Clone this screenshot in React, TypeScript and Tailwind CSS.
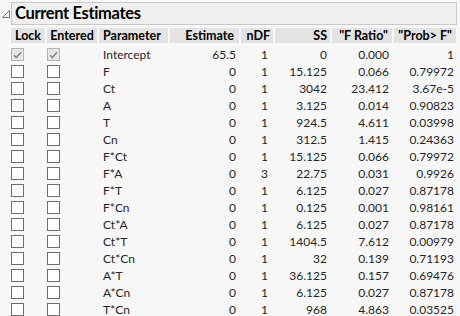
import React from "react";

const rows: [string, string, string, string, string, string][] = [
  ["Intercept", "65.5", "1", "0", "0.000", "1"],
  ["F", "0", "1", "15.125", "0.066", "0.79972"],
  ["Ct", "0", "1", "3042", "23.412", "3.67e-5"],
  ["A", "0", "1", "3.125", "0.014", "0.90823"],
  ["T", "0", "1", "924.5", "4.611", "0.03998"],
  ["Cn", "0", "1", "312.5", "1.415", "0.24363"],
  ["F*Ct", "0", "1", "15.125", "0.066", "0.79972"],
  ["F*A", "0", "3", "22.75", "0.031", "0.9926"],
  ["F*T", "0", "1", "6.125", "0.027", "0.87178"],
  ["F*Cn", "0", "1", "0.125", "0.001", "0.98161"],
  ["Ct*A", "0", "1", "6.125", "0.027", "0.87178"],
  ["Ct*T", "0", "1", "1404.5", "7.612", "0.00979"],
  ["Ct*Cn", "0", "1", "32", "0.139", "0.71193"],
  ["A*T", "0", "1", "36.125", "0.157", "0.69476"],
  ["A*Cn", "0", "1", "6.125", "0.027", "0.87178"],
  ["T*Cn", "0", "1", "968", "4.863", "0.03525"],
];

function Box({ checked }: { checked?: boolean }) {
  if (checked) {
    return (
      <div className="w-[13px] h-[13px] border border-[#b4b4b4] bg-[#e6e6e6] flex items-center justify-center">
        <svg width="9" height="8" viewBox="0 0 9 8">
          <path d="M1 4.2 L3.3 6.5 L8 1.2" fill="none" stroke="#8a8a8a" strokeWidth="1.6" />
        </svg>
      </div>
    );
  }
  return <div className="w-[13px] h-[13px] border border-[#6e6e6e] bg-white" />;
}

const cols = "grid grid-cols-[34px_50px_69px_69px_32px_55px_60px_62px] gap-x-[2px] pl-[11px]";

export default function App() {
  return (
    <div className="w-[460px] h-[316px] bg-[#f7f7f7] overflow-hidden font-['Lato',sans-serif] text-[12px]">
      <div className="flex items-center pt-[2px]">
        <div className="w-[11px] flex justify-center pt-[1px]">
          <svg width="10" height="10" viewBox="0 0 10 10">
            <path d="M1.5 8.5 L8.5 8.5 L8.5 1.5 Z" fill="none" stroke="#7a7a7a" strokeWidth="1" />
          </svg>
        </div>
        <div className="w-[446px] h-[23px] border border-[#c9c9c9] bg-[#efefef] flex items-center pl-[3px]">
          <span className="text-[16.5px] font-bold tracking-[-0.35px] text-black">Current Estimates</span>
        </div>
      </div>

      <div className={`${cols} mt-[3px] h-[15px] font-bold text-black text-[12.5px] leading-[15px]`}>
        <div className="bg-[#e3e3e3] text-center">Lock</div>
        <div className="bg-[#e3e3e3] text-center">Entered</div>
        <div className="bg-[#e3e3e3] pl-[4px]">Parameter</div>
        <div className="bg-[#e3e3e3] text-right pr-[5px]">Estimate</div>
        <div className="bg-[#e3e3e3] text-right pr-[3px]">nDF</div>
        <div className="bg-[#e3e3e3] text-right pr-[3px]">SS</div>
        <div className="bg-[#e3e3e3] text-right pr-[4px]">"F Ratio"</div>
        <div className="bg-[#e3e3e3] text-right pr-[4px]">"Prob&gt; F"</div>
      </div>

      <div className="mt-[3px] text-[#262626]">
        {rows.map((r, i) => (
          <div key={r[0]} className={`${cols} h-[17px] items-center leading-[17px]`}>
            <div><Box checked={i === 0} /></div>
            <div><Box checked={i === 0} /></div>
            <div className="pl-[4px]">{r[0]}</div>
            <div className="text-right pr-[3px]">{r[1]}</div>
            <div className="text-right pr-[5px]">{r[2]}</div>
            <div className="text-right pr-[3px]">{r[3]}</div>
            <div className="text-right pr-[3px]">{r[4]}</div>
            <div className="text-right pr-[2px]">{r[5]}</div>
          </div>
        ))}
      </div>
    </div>
  );
}
